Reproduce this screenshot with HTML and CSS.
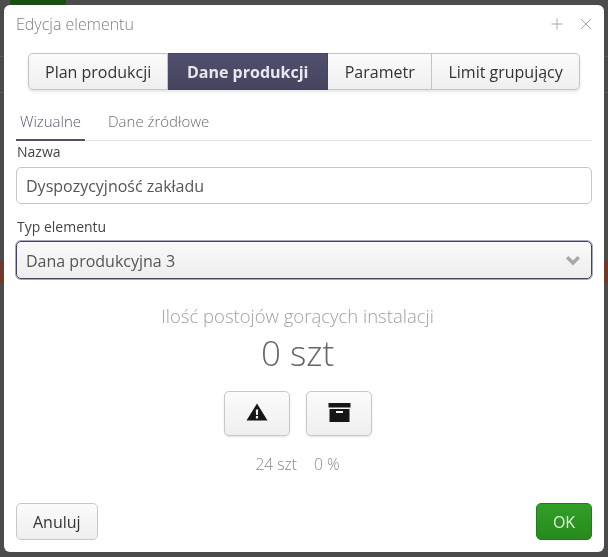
FILE: index.html
```html
<!DOCTYPE html>
<html lang="pl">
<head>
<meta charset="utf-8">
<title>Edycja elementu</title>
<link rel="stylesheet" href="styles.css">
</head>
<body>
<div class="backdrop">
  <div class="bg-ok"></div>
  <div class="bg-red"></div>
  <div class="bg-line l1"></div>
  <div class="bg-line l2"></div>
</div>
<div class="modal">
  <header class="modal-head">
    <span class="modal-title">Edycja elementu</span>
    <span class="modal-tools">
      <svg class="tool" width="12" height="12" viewBox="0 0 12 12"><path d="M6 .5v11M.5 6h11"/></svg>
      <svg class="tool" width="12" height="12" viewBox="0 0 12 12"><path d="M1 1l10 10M11 1L1 11"/></svg>
    </span>
  </header>
  <div class="btn-group">
    <button class="seg">Plan produkcji</button>
    <button class="seg active">Dane produkcji</button>
    <button class="seg param">Parametr</button>
    <button class="seg">Limit grupujący</button>
  </div>
  <nav class="tabs">
    <span class="tab current">Wizualne</span>
    <span class="tab">Dane źródłowe</span>
  </nav>
  <label class="field-label first">Nazwa</label>
  <div class="input">Dyspozycyjność zakładu</div>
  <label class="field-label second">Typ elementu</label>
  <div class="select">
    <span>Dana produkcyjna 3</span>
    <svg class="chev" width="16" height="11" viewBox="0 0 16 11"><path d="M2.2 2.2L8 8l5.8-5.8"/></svg>
  </div>
  <section class="preview">
    <div class="pv-title">Ilość postojów gorących instalacji</div>
    <div class="pv-value">0 szt</div>
    <div class="pv-actions">
      <button class="icon-btn">
        <svg width="22" height="18" viewBox="0 0 22 18"><path class="ink" fill-rule="evenodd" d="M11 .5L21.500 17.500H.5zM9.800 6.500l.3 5.500h1.800l.3-5.500zM9.900 13v2.400h2.200V13z"/></svg>
      </button>
      <button class="icon-btn">
        <svg width="23" height="19" viewBox="0 0 23 19"><path class="ink" fill-rule="evenodd" d="M.5 0h22v4.500H.5zM1.500 6h20v13h-20zM8 8v2h7V8z"/></svg>
      </button>
    </div>
    <div class="pv-meta"><span>24 szt</span><span>0 %</span></div>
  </section>
  <footer class="modal-foot">
    <button class="btn">Anuluj</button>
    <button class="btn ok">OK</button>
  </footer>
</div>
</body>
</html>
```
FILE: styles.css
```css
* { box-sizing: border-box; }
html, body { margin: 0; height: 100%; }
body {
  width: 608px;
  height: 557px;
  overflow: hidden;
  position: relative;
  background: #4b4b4b;
  font-family: "Open Sans", sans-serif;
  color: #333;
}
.backdrop { position: absolute; inset: 0; }
.bg-ok { position: absolute; left: 10px; top: 0; width: 56px; height: 5px; background: #1b4d14; }
.bg-red { position: absolute; left: 0; right: 0; top: 261px; height: 23px; background: #70392a; }
.bg-line { position: absolute; left: 0; right: 0; height: 1px; background: #5c5c5c; }
.l1 { top: 56px; }
.l2 { top: 92px; }
.modal {
  position: absolute;
  left: 4px;
  top: 5px;
  width: 600px;
  height: 547px;
  background: #fff;
  border-radius: 6px;
  padding: 0 12px;
  display: flex;
  flex-direction: column;
  will-change: transform;
}
.modal-head {
  height: 38px;
  display: flex;
  align-items: center;
  justify-content: space-between;
  padding-bottom: 1px;
}
.modal-title { font-size: 16px; font-weight: 300; color: #808080; }
.modal-tools { display: flex; gap: 17px; }
.tool path { stroke: #aaa; fill: none; stroke-width: 1; }
.btn-group {
  display: flex;
  margin: 10px 12px 0;
  height: 37px;
  border-radius: 5px;
  box-shadow: 0 2px 3px rgba(0,0,0,.1);
}
.seg {
  font: 16px "Open Sans", sans-serif;
  color: #333;
  height: 37px;
  padding: 0 16px;
  border: 1px solid #c4c4c4;
  border-left-width: 0;
  background: linear-gradient(#fbfbfb, #efefef);
  white-space: nowrap;
}
.seg:first-child { border-left-width: 1px; border-radius: 5px 0 0 5px; flex: 0 0 140px; }
.seg:last-child { border-radius: 0 5px 5px 0; flex: 1; }
.seg.param { flex: 0 0 104px; }
.seg.active {
  background: linear-gradient(#50506e, #44445f);
  border-color: #44445f;
  color: #e8e8ee;
  font-weight: 700;
  flex: 0 0 160px;
}
.tabs {
  display: flex;
  margin-top: 16px;
  height: 35px;
  border-bottom: 1px solid #e2e2e2;
  font-size: 15px;
  font-weight: 300;
  color: #6e6e6e;
}
.tab { padding: 5px 4px 0; margin-right: 19px; height: 35px; }
.tab.current { color: #55556e; border-bottom: 2px solid #50506e; width: 69px; }
.field-label { display: block; font-size: 14px; color: #444; padding-left: 1px; line-height: 20px; }
.field-label.first { margin-top: 1px; }
.field-label.second { margin-top: 13px; }
.input {
  height: 37px;
  margin-top: 5px;
  border: 1px solid #c8c8c8;
  border-radius: 5px;
  padding: 1px 9px 0;
  font-size: 16px;
  line-height: 34px;
  color: #555;
  background: #fff;
}
.select {
  height: 38px;
  margin-top: 4px;
  border: 1px solid #44445f;
  border-radius: 5px;
  box-shadow: 0 0 0 1px #a9a9bd;
  padding: 1px 10px 0 9px;
  font-size: 16px;
  color: #555;
  background: linear-gradient(#f9f9f9, #eeeeee);
  display: flex;
  align-items: center;
  justify-content: space-between;
}
.chev path { stroke: #a8a8a8; stroke-width: 3.500; fill: none; }
.preview {
  display: flex;
  flex-direction: column;
  align-items: center;
  margin-right: 13px;
  margin-top: 25px;
  background: #fff;
  will-change: transform;
}
.pv-title { font-size: 18.500px; font-weight: 300; line-height: 24px; color: #a0a0a0; }
.pv-value { font-size: 35px; font-weight: 300; line-height: 42px; color: #666; margin-top: 4px; }
.pv-actions { display: flex; gap: 16px; margin-top: 17px; margin-left: 1px; }
.icon-btn {
  width: 66px;
  height: 45px;
  padding: 0 0 3px;
  border: 1px solid #c8c8c8;
  border-radius: 5px;
  background: linear-gradient(#fbfbfb, #efefef);
  box-shadow: 0 1px 2px rgba(0,0,0,.12);
  display: flex;
  align-items: center;
  justify-content: center;
}
.ink { fill: #161616; }
.pv-meta { display: flex; gap: 17px; margin-top: 18px; font-size: 15.600px; font-weight: 300; line-height: 20px; color: #888; }
.modal-foot { margin-top: auto; padding-bottom: 12px; display: flex; justify-content: space-between; }
.btn {
  font: 16px "Open Sans", sans-serif;
  color: #333;
  height: 37px;
  padding: 0 16px;
  border: 1px solid #c8c8c8;
  border-radius: 5px;
  background: linear-gradient(#fbfbfb, #efefef);
}
.btn.ok { width: 56px; padding: 0; background: linear-gradient(#31a026, #278a1d); border-color: #237a1a; color: #e6f3e4; }
```
